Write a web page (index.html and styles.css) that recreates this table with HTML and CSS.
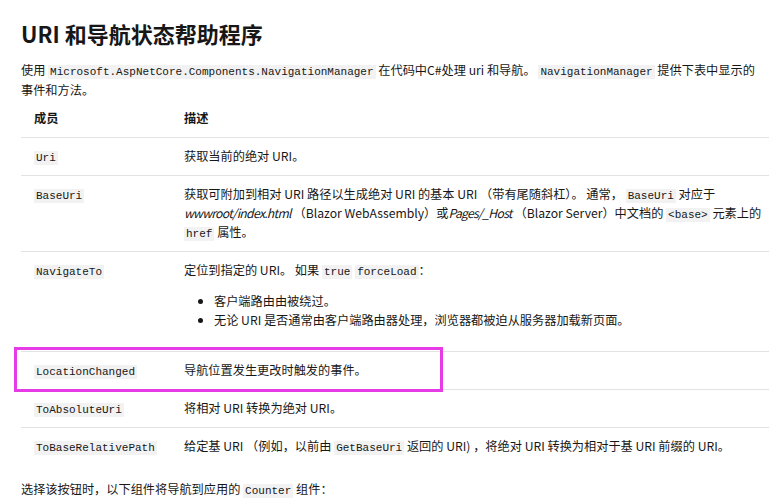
FILE: index.html
```html
<!DOCTYPE html>
<html lang="zh-CN">
<head>
<meta charset="utf-8">
<title>URI 和导航状态帮助程序</title>
<link rel="stylesheet" href="styles.css">
</head>
<body>
<main class="content">
  <h2 class="title">URI 和导航状态帮助程序</h2>
  <p class="intro">使用 <code>Microsoft.AspNetCore.Components.NavigationManager</code> 在代码中C#处理 uri 和导航。 <code>NavigationManager</code> 提供下表中显示的事件和方法。</p>
  <table class="members">
    <thead>
      <tr><th class="col-name">成员</th><th>描述</th></tr>
    </thead>
    <tbody>
      <tr><td><code>Uri</code></td><td>获取当前的绝对 URI。</td></tr>
      <tr><td><code>BaseUri</code></td><td>获取可附加到相对 URI 路径以生成绝对 URI 的基本 URI （带有尾随斜杠）。 通常， <code>BaseUri</code> 对应于 <em>wwwroot/index.html</em> （Blazor WebAssembly）或<em>Pages/_Host</em> （Blazor Server）中文档的 <code>&lt;base&gt;</code> 元素上的 <code>href</code> 属性。</td></tr>
      <tr><td><code>NavigateTo</code></td><td><p class="cell-p">定位到指定的 URI。 如果 <code>true</code> <code>forceLoad</code>：</p>
        <ul class="cell-list">
          <li>客户端路由由被绕过。</li>
          <li>无论 URI 是否通常由客户端路由器处理，浏览器都被迫从服务器加载新页面。</li>
        </ul></td></tr>
      <tr class="highlight-row"><td><code>LocationChanged</code></td><td>导航位置发生更改时触发的事件。</td></tr>
      <tr><td><code>ToAbsoluteUri</code></td><td>将相对 URI 转换为绝对 URI。</td></tr>
      <tr><td><code>ToBaseRelativePath</code></td><td>给定基 URI （例如，以前由 <code>GetBaseUri</code> 返回的 URI) ，将绝对 URI 转换为相对于基 URI 前缀的 URI。</td></tr>
    </tbody>
  </table>
  <p class="outro">选择该按钮时，以下组件将导航到应用的 <code>Counter</code> 组件：</p>
</main>
<div class="annotation"></div>
</body>
</html>
```

FILE: styles.css
```css
html, body {
  margin: 0;
  padding: 0;
  background: #ffffff;
  overflow: hidden;
}

body {
  width: 769px;
  height: 501px;
  position: relative;
  font-family: "Noto Sans CJK SC", "Noto Sans", sans-serif;
  font-size: 12.2px;
  color: #171717;
}

.content {
  width: 760px;
  padding-left: 21px;
  padding-top: 19px;
}

.title {
  margin: 0 0 13px 0;
  font-size: 22px;
  line-height: 28px;
  font-weight: 700;
}

.intro {
  margin: 0;
  padding-right: 14px;
  line-height: 20px;
}

code {
  font-family: "Liberation Mono", "DejaVu Sans Mono", monospace;
  font-size: 11px;
  line-height: 1;
  background: #f2f2f2;
  padding: 1px 2px;
  color: #171717;
}

em {
  font-style: italic;
  letter-spacing: -0.7px;
}

.members {
  width: 100%;
  border-collapse: collapse;
  table-layout: fixed;
}

.members th,
.members td {
  text-align: left;
  vertical-align: top;
  padding: 9px 13px;
  line-height: 19px;
}

.members th {
  font-weight: 700;
  border-bottom: 1px solid #e3e3e3;
}

.members .col-name {
  width: 124px;
}

.members tbody tr + tr td {
  border-top: 1px solid #e3e3e3;
}

.cell-p {
  margin: 0;
}

.cell-list {
  margin: 12px 0 12px 0;
  padding-left: 30px;
}

.outro {
  margin: 14px 0 0 0;
  line-height: 20px;
}

.annotation {
  position: absolute;
  left: 14px;
  top: 347px;
  width: 423px;
  height: 39px;
  border: 3px solid #e63be6;
}
```
